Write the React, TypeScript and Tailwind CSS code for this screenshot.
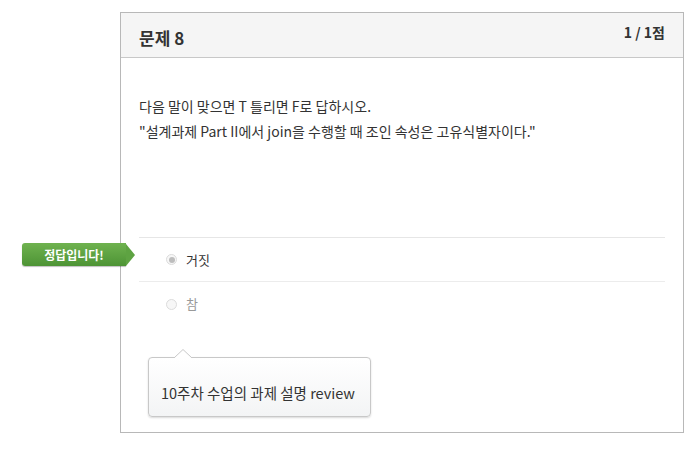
const font = { fontFamily: '"Noto Sans CJK KR", "Noto Sans", sans-serif' };

function Radio({ checked }: { checked?: boolean }) {
  return (
    <span className="flex h-[11px] w-[11px] items-center justify-center rounded-full border border-[#dcdcdc] bg-[#f7f7f7]">
      {checked && <span className="h-[6px] w-[6px] rounded-full bg-[#bdbdbd]" />}
    </span>
  );
}

export default function App() {
  return (
    <div className="h-[457px] w-[697px] overflow-hidden bg-white text-[#333]" style={font}>
      <div className="relative ml-[120px] mt-[12px] flex h-[421px] w-[564px] flex-col border border-[#b8b8b8]">
        <div className="flex h-[45px] items-center justify-between border-b border-[#c8c8c8] bg-[#f5f5f5] px-[18px]">
          <h3 className="pt-[6px] text-[17px] font-bold text-[#333]">문제 8</h3>
          <span className="pb-[6px] text-[14px] font-bold text-[#333]">1 / 1점</span>
        </div>

        <div className="px-[18px] pt-[36px] text-[14px] leading-[25px]">
          <p>다음 말이 맞으면 T 틀리면 F로 답하시오.</p>
          <p>"설계과제 Part II에서 join을 수행할 때 조인 속성은 고유식별자이다."</p>
        </div>

        <ul className="mx-[18px] mt-[93px] border-t border-[#e6e6e6] text-[13px]">
          <li className="flex h-[44px] items-center gap-[9px] border-b border-[#ececec] pl-[27px]">
            <Radio checked />
            <span className="text-[#333]">거짓</span>
          </li>
          <li className="flex h-[44px] items-center gap-[9px] pl-[27px]">
            <Radio />
            <span className="text-[#999]">참</span>
          </li>
        </ul>

        {/* correct-answer badge */}
        <div className="absolute left-[-99px] top-[230px] flex items-center">
          <div className="flex h-[23px] w-[104px] items-center justify-center rounded-l-[3px] bg-gradient-to-b from-[#6fb24f] to-[#4d9435] text-[12px] font-bold text-white shadow-[0_1px_1px_rgba(0,0,0,0.25)]">
            정답입니다!
          </div>
          <div className="h-0 w-0 border-y-[11.5px] border-l-[9px] border-y-transparent border-l-[#5ea342]" />
        </div>

        {/* tooltip */}
        <div className="absolute left-[27px] top-[344px] w-[223px]">
          <svg className="absolute left-[26px] top-[-8px]" width="18" height="9" viewBox="0 0 18 9">
            <path d="M0 9 L9 0.5 L18 9" fill="#fff" stroke="#c8c8c8" strokeWidth="1" />
          </svg>
          <div className="flex h-[60px] items-end rounded-[4px] border border-[#c8c8c8] bg-gradient-to-b from-white to-[#f3f4f5] px-[12px] pb-[12px] text-[14.5px] text-[#333] shadow-[0_1px_2px_rgba(0,0,0,0.15)]">
            10주차 수업의 과제 설명 review
          </div>
        </div>
      </div>
    </div>
  );
}
